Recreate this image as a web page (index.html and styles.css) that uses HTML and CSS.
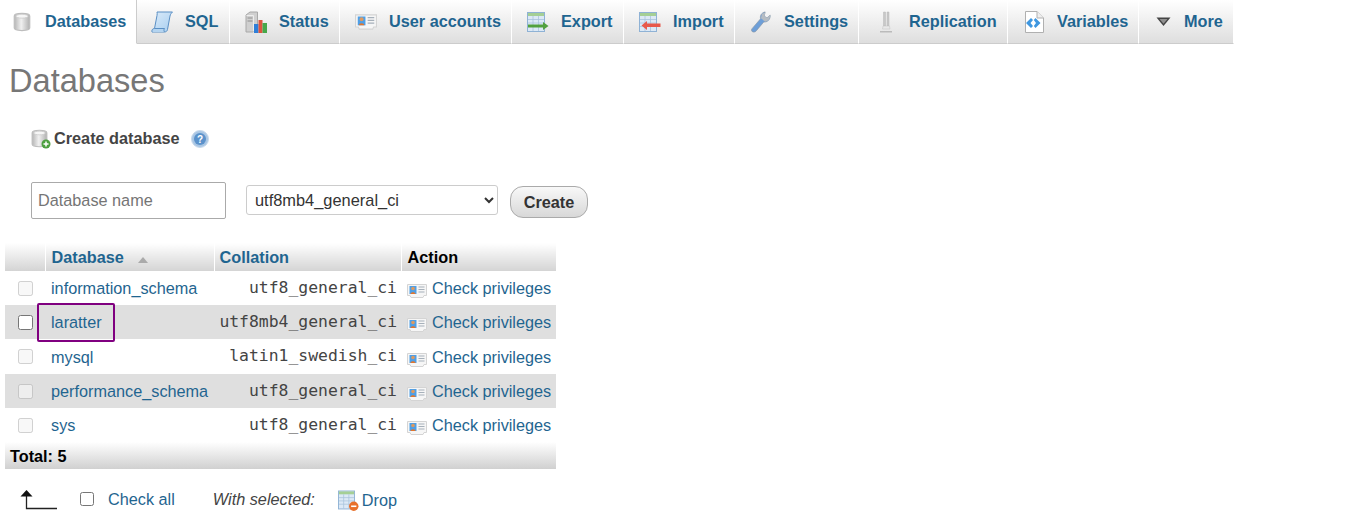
FILE: index.html
```html
<!DOCTYPE html>
<html lang="en">
<head>
    <meta charset="UTF-8">
    <title>Databases</title>
    <link rel="stylesheet" href="styles.css">
</head>
<body>
    <svg class="sprites" width="0" height="0">
        <defs>
            <linearGradient id="steel" x1="0" y1="0" x2="1" y2="0">
                <stop offset="0" stop-color="#b5b5b5"/>
                <stop offset=".45" stop-color="#f0f0f0"/>
                <stop offset="1" stop-color="#b0b0b0"/>
            </linearGradient>
            <linearGradient id="paper" x1="0" y1="0" x2="1" y2="1">
                <stop offset="0" stop-color="#dcecfa"/>
                <stop offset="1" stop-color="#a6cdef"/>
            </linearGradient>
            <symbol id="i-db" viewBox="0 0 16 18">
                <path d="M1 3.500C1 .500 15 .500 15 3.500V14.500C15 17.500 1 17.500 1 14.500Z" fill="url(#steel)" stroke="#bdbdbd"/>
                <ellipse cx="8" cy="3.800" rx="5.500" ry="1.700" fill="#f6f6f6" stroke="#cacaca" stroke-width=".7"/>
            </symbol>
            <symbol id="i-sql" viewBox="0 0 22 22">
                <path d="M6 1H21.500C20.500 2 19.500 3 19 5L16.500 18.500C16.300 20 15 21 13.500 21H1C2.500 20 3.200 19 3.500 17.500L6 4.500C6.200 3 6.300 2 6 1Z" fill="url(#paper)" stroke="#5a8fc4" stroke-linejoin="round"/>
                <path d="M1 21C.500 19 1.500 17.500 3.500 17.500H13.500C12.800 18.500 12.800 20 13.500 21" fill="#b4d4f0" stroke="#5a8fc4"/>
            </symbol>
            <symbol id="i-status" viewBox="0 0 22 22">
                <path d="M1 4L5 1H12.500V17L8 21H1Z" fill="#cfcfcf" stroke="#a8a8a8"/>
                <path d="M1.500 4.500H8.500V20.500" fill="none" stroke="#ededed"/>
                <path d="M2.500 7H7.500M2.500 10H7.500" stroke="#8e8e8e"/>
                <rect x="9" y="13" width="4.500" height="9" fill="#2f7fd8"/>
                <rect x="13.500" y="9" width="4" height="13" fill="#dd5540"/>
                <rect x="17.500" y="12" width="4.500" height="10" fill="#47a84a"/>
            </symbol>
            <symbol id="i-user" viewBox="0 0 20 16">
                <path d="M.500 1.500H19.500V12.500H17L16 14.500H4L3 12.500H.500Z" fill="#f6f6f6" stroke="#d4d4d4"/>
                <rect x="2.500" y="3" width="7" height="8" fill="#4f9fe6"/>
                <circle cx="6" cy="5.500" r="1.800" fill="#dc9a62"/>
                <path d="M3.500 11C3.500 8.500 8.500 8.500 8.500 11Z" fill="#e0762f"/>
                <path d="M11.500 4H17.500M11.500 6.500H17.500M11.500 9H17.500" stroke="#a6b0ba" stroke-width="1.200"/>
            </symbol>
            <symbol id="i-table" viewBox="0 0 20 20">
                <rect x=".500" y=".500" width="17" height="19" fill="#dce9f6" stroke="#8fb2d5"/>
                <rect x="1" y="1" width="16" height="3" fill="#a5cf95"/>
                <path d="M1 7.500H17M1 11H17M1 14.500H17M6 4V19M11.500 4V19" stroke="#a9c3dd" stroke-width=".8"/>
            </symbol>
            <symbol id="i-export" viewBox="0 0 22 20">
                <use href="#i-table" width="20" height="20"/>
                <path d="M1 12.500H16V10L21.500 14L16 18V15.500H1Z" fill="#52a13e"/>
            </symbol>
            <symbol id="i-import" viewBox="0 0 22 20">
                <use href="#i-table" width="20" height="20"/>
                <path d="M21.500 11.500H8V9L2.500 13.500L8 18V15H21.500Z" fill="#e8594b"/>
            </symbol>
            <symbol id="i-wrench" viewBox="0 0 22 24">
                <path d="M3 23C1 23 0 21 1 19.500L10.500 8.500C9.800 5.500 11 2 15.500 1L14.500 5.500L17.500 7.500L21 4.500C21.500 9 18 12.500 14 12L6 21.500C5 22.700 4 23 3 23Z" fill="#6e9fd8" stroke="#8a96a3" stroke-width=".7"/>
                <path d="M12 3L16 1.500L14.500 5.500L17.500 7.500L21 4.500C21.300 8 19 11 15.500 11.800L11 8Z" fill="#b6bcc2"/>
            </symbol>
            <symbol id="i-replication" viewBox="0 0 16 22">
                <path d="M5.500 1H7.500V15H5.500ZM9 1H11V15H9Z" fill="#c8c8c8" stroke="#b8b8b8" stroke-width=".5"/>
                <path d="M5 15H11.500L12 18H4.500Z" fill="#e8e8e8" stroke="#c2c2c2" stroke-width=".5"/>
                <path d="M2 20H14V21.500H2Z" fill="#bbb"/>
            </symbol>
            <symbol id="i-variables" viewBox="0 0 20 22">
                <path d="M1.500 .500H13L19.500 7V21.500H1.500Z" fill="#fff" stroke="#b0b0b0"/>
                <path d="M13 .500V7H19.500" fill="#eee" stroke="#b0b0b0"/>
                <path d="M7 7L2 12L7 17L9 15L6.500 12L9 9ZM11.500 7L16.500 12L11.500 17L9.800 15L12 12L9.800 9Z" fill="#3f97e0"/>
            </symbol>
            <symbol id="i-more" viewBox="0 0 14 10">
                <path d="M0 .500H14L7 9Z" fill="#444"/>
                <path d="M3 2H11L7 6.800Z" fill="#8f8f8f"/>
            </symbol>
            <symbol id="i-newdb" viewBox="0 0 20 20">
                <use href="#i-db" width="17" height="19"/>
                <circle cx="15" cy="15" r="4.500" fill="#4da040"/>
                <path d="M15 12.500V17.500M12.500 15H17.500" stroke="#fff" stroke-width="1.500"/>
            </symbol>
            <symbol id="i-help" viewBox="0 0 18 18">
                <circle cx="9" cy="9" r="8.500" fill="#a9c6e4" stroke="#c9daec"/>
                <circle cx="9" cy="9" r="6" fill="#5b92cb"/>
                <text x="9" y="12.500" text-anchor="middle" class="help-mark">?</text>
            </symbol>
            <symbol id="i-drop" viewBox="0 0 20 20">
                <use href="#i-table" width="18" height="19"/>
                <circle cx="15" cy="15.500" r="4.500" fill="#e8702a"/>
                <path d="M12.500 15.500H17.500" stroke="#fff" stroke-width="1.500"/>
            </symbol>
        </defs>
    </svg>

    <nav class="tabs">
        <a class="tab tab-active tab-databases" href="#"><svg class="ico-db"><use href="#i-db"/></svg>Databases</a>
        <a class="tab tab-sql" href="#"><svg class="ico"><use href="#i-sql"/></svg>SQL</a>
        <a class="tab tab-status" href="#"><svg class="ico"><use href="#i-status"/></svg>Status</a>
        <a class="tab tab-users" href="#"><svg class="ico"><use href="#i-user"/></svg>User accounts</a>
        <a class="tab tab-export" href="#"><svg class="ico"><use href="#i-export"/></svg>Export</a>
        <a class="tab tab-import" href="#"><svg class="ico"><use href="#i-import"/></svg>Import</a>
        <a class="tab tab-settings" href="#"><svg class="ico"><use href="#i-wrench"/></svg>Settings</a>
        <a class="tab tab-replication" href="#"><svg class="ico"><use href="#i-replication"/></svg>Replication</a>
        <a class="tab tab-variables" href="#"><svg class="ico"><use href="#i-variables"/></svg>Variables</a>
        <a class="tab tab-more" href="#"><svg class="ico-more"><use href="#i-more"/></svg>More</a>
    </nav>

    <h2 class="page-title">Databases</h2>

    <div class="create-title">
        <svg class="ico-newdb"><use href="#i-newdb"/></svg>
        <span class="create-label">Create database</span>
        <svg class="ico-help"><use href="#i-help"/></svg>
    </div>

    <form class="create-form">
        <input class="db-name" type="text" placeholder="Database name">
        <select class="db-collation">
            <option>utf8mb4_general_ci</option>
        </select>
        <button class="create-btn" type="button">Create</button>
    </form>

    <table class="db-table">
        <thead>
            <tr>
                <th class="col-check"></th>
                <th class="col-name"><a href="#">Database</a><span class="sort-arrow"></span></th>
                <th class="col-coll"><a href="#">Collation</a></th>
                <th class="col-action">Action</th>
            </tr>
        </thead>
        <tbody>
            <tr>
                <td class="cell-check"><input type="checkbox" disabled></td>
                <td class="cell-name"><a href="#">information_schema</a></td>
                <td class="cell-coll">utf8_general_ci</td>
                <td class="cell-action"><a href="#"><svg class="ico-user"><use href="#i-user"/></svg>Check privileges</a></td>
            </tr>
            <tr>
                <td class="cell-check"><input type="checkbox"></td>
                <td class="cell-name"><a class="marked" href="#">laratter</a></td>
                <td class="cell-coll">utf8mb4_general_ci</td>
                <td class="cell-action"><a href="#"><svg class="ico-user"><use href="#i-user"/></svg>Check privileges</a></td>
            </tr>
            <tr>
                <td class="cell-check"><input type="checkbox" disabled></td>
                <td class="cell-name"><a href="#">mysql</a></td>
                <td class="cell-coll">latin1_swedish_ci</td>
                <td class="cell-action"><a href="#"><svg class="ico-user"><use href="#i-user"/></svg>Check privileges</a></td>
            </tr>
            <tr>
                <td class="cell-check"><input type="checkbox" disabled></td>
                <td class="cell-name"><a href="#">performance_schema</a></td>
                <td class="cell-coll">utf8_general_ci</td>
                <td class="cell-action"><a href="#"><svg class="ico-user"><use href="#i-user"/></svg>Check privileges</a></td>
            </tr>
            <tr>
                <td class="cell-check"><input type="checkbox" disabled></td>
                <td class="cell-name"><a href="#">sys</a></td>
                <td class="cell-coll">utf8_general_ci</td>
                <td class="cell-action"><a href="#"><svg class="ico-user"><use href="#i-user"/></svg>Check privileges</a></td>
            </tr>
        </tbody>
        <tfoot>
            <tr>
                <th class="total" colspan="4">Total: 5</th>
            </tr>
        </tfoot>
    </table>

    <div class="bulk-bar">
        <svg class="ico-arrow" viewBox="0 0 38 20"><path d="M6.500 6V18.500H37" fill="none" stroke="#222" stroke-width="1.300"/><path d="M6.500 0L12.500 6.500H.500Z" fill="#111"/></svg>
        <input class="check-all" type="checkbox">
        <a class="check-all-label" href="#">Check all</a>
        <em class="with-selected">With selected:</em>
        <a class="drop-link" href="#"><svg class="ico-drop"><use href="#i-drop"/></svg>Drop</a>
    </div>
</body>
</html>
```

FILE: styles.css
```css
body {
    margin: 0;
    font-family: "Liberation Sans", Arial, sans-serif;
    font-size: 16.25px;
    color: #444;
    background-color: #fff;
}

a {
    color: #1f6590;
    text-decoration: none;
}

.sprites {
    display: block;
    height: 0;
}

.help-mark {
    font-family: "Liberation Sans", Arial, sans-serif;
    font-size: 10px;
    font-weight: bold;
    fill: #fff;
}

/* top tabs */
.tabs {
    display: flex;
    height: 44px;
    box-sizing: border-box;
    padding-left: 0;
}

.tab {
    display: flex;
    align-items: center;
    box-sizing: border-box;
    height: 44px;
    font-weight: bold;
    border-right: 1px solid #fff;
    border-bottom: 1px solid #ccc;
    background: linear-gradient(#fff, #dedede);
}

.tab svg {
    flex: none;
}

.tab-active {
    background: #fff;
    border-bottom-color: #fff;
    border-right: 1px solid #ccc;
}

.ico {
    width: 22px;
    height: 22px;
    margin-right: 12px;
}

.ico-db {
    width: 18px;
    height: 20px;
    margin-right: 14px;
    margin-left: -1px;
}

.ico-more {
    width: 15px;
    height: 10px;
    margin-right: 13px;
}

.tab-databases { width: 137px; padding-left: 14px; }
.tab-sql { width: 93px; padding-left: 14px; }
.tab-status { width: 110px; padding-left: 15px; }
.tab-users { width: 172px; padding-left: 15px; }
.tab-export { width: 112px; padding-left: 15px; }
.tab-import { width: 111px; padding-left: 15px; }
.tab-settings { width: 124px; padding-left: 15px; }
.tab-replication { width: 149px; padding-left: 16px; }
.tab-variables { width: 131px; padding-left: 15px; }
.tab-more { width: 95px; padding-left: 17px; }

/* heading + create form */
.page-title {
    margin: 18px 0 0 9px;
    font-size: 32.6px;
    font-weight: normal;
    line-height: 37px;
    color: #777;
}

.create-title {
    display: flex;
    align-items: center;
    margin: 30px 0 0 31px;
    height: 20px;
    font-weight: bold;
    color: #444;
}

.create-label {
    margin-top: -2px;
}

.ico-newdb {
    width: 20px;
    height: 20px;
    margin-right: 3px;
}

.ico-help {
    width: 18px;
    height: 18px;
    margin-left: 11px;
}

.create-form {
    display: flex;
    align-items: flex-start;
    margin: 33px 0 0 31px;
}

.db-name {
    box-sizing: border-box;
    width: 195px;
    height: 37px;
    padding: 0 6px;
    font: 16.25px "Liberation Sans", Arial, sans-serif;
    border: 1px solid #aaa;
    border-radius: 2px;
}

.db-name::placeholder {
    color: #757575;
}

.db-collation {
    box-sizing: border-box;
    width: 252px;
    height: 30px;
    margin: 3px 0 0 20px;
    padding-left: 4px;
    font: 16.4px "Liberation Sans", Arial, sans-serif;
    color: #333;
    background-color: #fff;
    border: 1px solid #ccc;
    border-radius: 3px;
}

.create-btn {
    box-sizing: border-box;
    width: 78px;
    height: 32px;
    margin: 4px 0 0 12px;
    padding: 0;
    font: bold 16.25px "Liberation Sans", Arial, sans-serif;
    color: #333;
    background: linear-gradient(#f8f8f8, #d8d8d8);
    border: 1px solid #aaa;
    border-radius: 13px;
}

/* database list */
.db-table {
    width: 551px;
    margin: 24px 0 0 5px;
    border-collapse: collapse;
    table-layout: fixed;
}

.db-table thead th {
    height: 28px;
    box-sizing: border-box;
    padding: 0 0 0 6px;
    text-align: left;
    color: #000;
    background: linear-gradient(#fff, #d4d4d4);
    border-left: 1px solid #fff;
}

.db-table thead th:first-child {
    border-left: none;
}

.db-table thead .col-coll {
    padding-left: 5px;
}

.col-check { width: 40px; }
.col-name { width: 169px; }
.col-coll { width: 187px; }

.sort-arrow {
    display: inline-block;
    margin-left: 14px;
    border-left: 5px solid transparent;
    border-right: 5px solid transparent;
    border-bottom: 6px solid #aaa;
}

.db-table td {
    height: 34px;
    box-sizing: border-box;
    padding: 2px 0 0 7px;
    white-space: nowrap;
}

.db-table tbody tr:nth-child(3) td {
    height: 35px;
}

.db-table tbody tr:nth-child(even) {
    background-color: #dfdfdf;
}

.db-table .cell-name {
    padding: 0 0 0 6px;
}

.db-table tbody tr:nth-child(3) .cell-name {
    padding-top: 2px;
}

.cell-check {
    text-align: center;
}

.db-table .cell-check {
    padding: 0;
}

.cell-check input {
    display: block;
    width: 15px;
    height: 15px;
    margin: 0 0 0 13px;
}

.db-table .cell-coll {
    padding: 0 4px 2px 0;
    text-align: right;
    font-family: "DejaVu Sans Mono", monospace;
    font-size: 16.4px;
}

.marked {
    position: relative;
}

/* purple box drawn round the highlighted name */
.marked::after {
    content: "";
    position: absolute;
    left: -14px;
    top: -10px;
    width: 74px;
    height: 35px;
    border: 2px solid #800080;
    border-radius: 2px;
}

.ico-user {
    width: 20px;
    height: 16px;
    margin-right: 5px;
    margin-left: -1px;
    vertical-align: -5px;
}

.db-table .total {
    height: 27px;
    box-sizing: border-box;
    padding: 2px 0 0 5px;
    text-align: left;
    color: #000;
    background: linear-gradient(#fff, #d0d0d0);
}

/* bottom bar */
.bulk-bar {
    display: flex;
    align-items: center;
    margin: 18px 0 0 20px;
    height: 24px;
}

.ico-arrow {
    width: 38px;
    height: 20px;
    margin-top: 2px;
}

.check-all {
    width: 14px;
    height: 14px;
    margin: 0 0 0 22px;
}

.check-all-label {
    margin-left: 14px;
}

.with-selected {
    margin-left: 38px;
}

.drop-link {
    display: flex;
    align-items: center;
    margin-left: 23px;
    position: relative;
    top: 1px;
}

.ico-drop {
    width: 21px;
    height: 21px;
    margin-right: 3px;
}
```
